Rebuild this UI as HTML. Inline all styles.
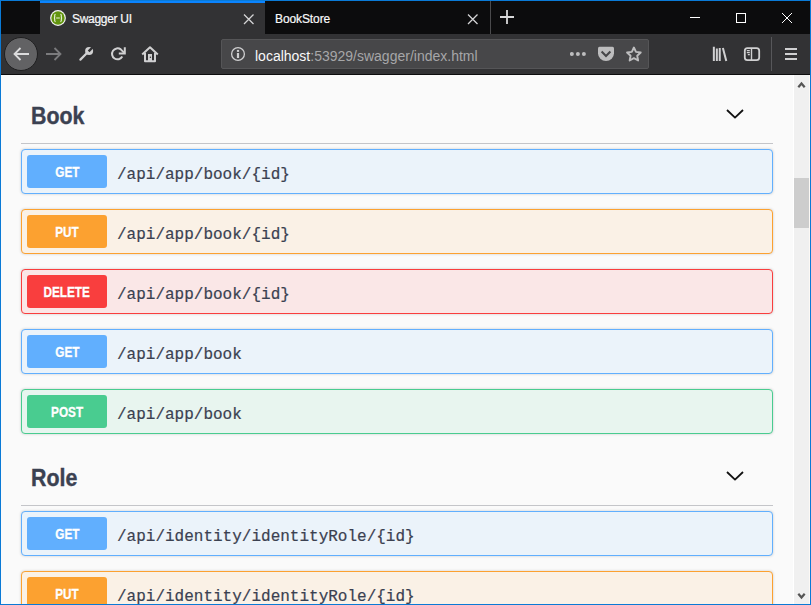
<!DOCTYPE html>
<html><head><meta charset="utf-8">
<style>
html,body{margin:0;padding:0;width:811px;height:605px;overflow:hidden;background:#0a7ad6;}
*{box-sizing:border-box;}
.abs{position:absolute;}
#titlebar{position:absolute;left:1px;top:1px;width:809px;height:33px;background:#0c0c0d;}
#toolbar{position:absolute;left:1px;top:34px;width:809px;height:40px;background:#323234;}
#tbline{position:absolute;left:1px;top:74px;width:809px;height:1px;background:#0c0c0d;}
#content{position:absolute;left:1px;top:75px;width:809px;height:529px;background:#fafafa;overflow:hidden;}
.tab{position:absolute;top:0;height:33px;}
.tabtext{position:absolute;font-family:"Liberation Sans",sans-serif;font-size:12px;color:#f9f9fa;top:11px;letter-spacing:-0.3px;-webkit-text-stroke:0.2px #f9f9fa;white-space:nowrap;}
.urlbar{position:absolute;left:220px;top:5px;width:428px;height:30px;background:#474749;border:1px solid #555557;border-radius:2px;}
.url{position:absolute;left:33px;top:7.5px;font-family:"Liberation Sans",sans-serif;font-size:14px;color:#f9f9fa;white-space:nowrap;}
.url span{color:#a6a6a8;}
.tag{position:absolute;left:20px;width:752px;height:1px;background:#c4c5c9;}
.tagname{position:absolute;left:30px;font-family:"Liberation Sans",sans-serif;font-weight:bold;font-size:24px;line-height:28px;color:#3b4151;transform:scaleX(0.89);transform-origin:0 0;-webkit-text-stroke:0.4px #3b4151;}
.op{position:absolute;left:20px;width:752px;height:45px;border:1px solid;border-radius:4px;box-shadow:0 0 3px rgba(0,0,0,.19);}
.m{position:absolute;left:5px;top:5px;width:80px;height:33px;border-radius:3px;color:#fff;font-family:"Liberation Sans",sans-serif;font-weight:bold;font-size:14px;text-align:center;line-height:35px;text-shadow:0 1px 0 rgba(0,0,0,.1);}
.p{position:absolute;left:95px;top:15px;font-family:"Liberation Mono",monospace;font-weight:normal;-webkit-text-stroke:0.2px #3b4151;font-size:16px;color:#3b4151;white-space:nowrap;line-height:20px;}
.m span{display:inline-block;transform:scaleX(0.84);-webkit-text-stroke:0.3px #fff;}
.get{background:#ebf3fa;border-color:#61affe;} .get .m{background:#61affe;}
.put{background:#faf1e6;border-color:#fca130;} .put .m{background:#fca130;}
.del{background:#fae7e7;border-color:#f93e3e;} .del .m{background:#f93e3e;}
.post{background:#e8f5ef;border-color:#49cc90;} .post .m{background:#49cc90;}
#sb{position:absolute;left:792px;top:0;width:17px;height:529px;background:#f0f0f0;border-left:1px solid #fff;border-right:1px solid #fdf9f5;}
</style></head><body>
<div id="titlebar">
  <div class="tab" style="left:39px;width:225px;background:#323234;">
    <div class="abs" style="left:0;top:0;width:225px;height:2px;background:#0a84ff;"></div>
    <svg class="abs" style="left:10px;top:9px" width="16" height="16" viewBox="0 0 16 16">
      <circle cx="8" cy="8" r="7.9" fill="#f4f4f4"/>
      <circle cx="8" cy="8" r="6.7" fill="#62940f"/>
      <path d="M5.6 4.3 Q4.6 4.4 4.7 5.6 L4.7 7.2 Q4.7 8 3.9 8 Q4.7 8 4.7 8.8 L4.7 10.4 Q4.6 11.6 5.6 11.7 M10.4 4.3 Q11.4 4.4 11.3 5.6 L11.3 7.2 Q11.3 8 12.1 8 Q11.3 8 11.3 8.8 L11.3 10.4 Q11.4 11.6 10.4 11.7" fill="none" stroke="#eef5e0" stroke-width="1.1"/>
      <path d="M6.2 8 H9.8" stroke="#cfe0b0" stroke-width="1.3"/>
    </svg>
    <div class="tabtext" style="left:32px;">Swagger UI</div>
    <svg class="abs" style="left:203px;top:12px" width="12" height="12" viewBox="0 0 12 12"><path d="M1 1.5L10.5 11M10.5 1.5L1 11" stroke="#d4d4d5" stroke-width="1.3"/></svg>
  </div>
  <div class="tabtext" style="left:274px;letter-spacing:-0.1px;">BookStore</div>
  <svg class="abs" style="left:466px;top:12px" width="12" height="12" viewBox="0 0 12 12"><path d="M1 1.5L10.5 11M10.5 1.5L1 11" stroke="#d4d4d5" stroke-width="1.3"/></svg>
  <div class="abs" style="left:489px;top:0;width:1px;height:33px;background:#4a4a4c;"></div>
  <svg class="abs" style="left:498px;top:8px" width="16" height="16" viewBox="0 0 16 16"><path d="M8 1V15M1 8H15" stroke="#d8d8d9" stroke-width="1.8"/></svg>
  <div class="abs" style="left:689px;top:16px;width:10px;height:1px;background:#fff;"></div>
  <div class="abs" style="left:735px;top:12px;width:10px;height:10px;border:1px solid #fff;"></div>
  <svg class="abs" style="left:780px;top:11px" width="12" height="12" viewBox="0 0 12 12"><path d="M1 1L11 11M11 1L1 11" stroke="#fff" stroke-width="1"/></svg>
</div>
<div id="toolbar">
  <div class="abs" style="left:3px;top:3px;width:34px;height:34px;border-radius:50%;background:#626264;border:1px solid #1f1f20;"></div>
  <svg class="abs" style="left:11px;top:12px" width="18" height="16" viewBox="0 0 18 16"><path d="M17 8H2.5M8.5 2L2.5 8L8.5 14" fill="none" stroke="#dcdcdd" stroke-width="1.8"/></svg>
  <svg class="abs" style="left:44px;top:12px" width="18" height="16" viewBox="0 0 18 16"><path d="M1 8H15.5M9.5 2L15.5 8L9.5 14" fill="none" stroke="#7b7b7d" stroke-width="1.8"/></svg>
  <svg class="abs" style="left:77px;top:12px" width="18" height="18" viewBox="0 0 18 18"><path d="M2.4 13.6L9.2 6.8" stroke="#d0d0d1" stroke-width="2.2" stroke-linecap="round"/><circle cx="11.1" cy="4.9" r="4" fill="#d0d0d1"/><path d="M10.6 5.4L16 0" stroke="#323234" stroke-width="2.4"/></svg>
  <svg class="abs" style="left:109px;top:12px" width="16" height="16" viewBox="0 0 16 16"><path d="M12.3 10.6A5.5 5.5 0 1 1 10.8 3.4L14 6.6" fill="none" stroke="#d0d0d1" stroke-width="2"/><path d="M14.8 1.2V7.4H8.8" fill="none" stroke="#d0d0d1" stroke-width="2"/></svg>
  <svg class="abs" style="left:140px;top:11px" width="18" height="18" viewBox="0 0 18 18"><path d="M1.2 9.6L9 2.3L16.8 9.6M4 8V16.3H14V8" fill="none" stroke="#d0d0d1" stroke-width="2" stroke-linejoin="round"/><rect x="7" y="9" width="4" height="7.5" fill="#d0d0d1"/><circle cx="9.4" cy="12.2" r="0.7" fill="#323234"/></svg>
  <div class="urlbar">
    <svg class="abs" style="left:8px;top:6px" width="16" height="16" viewBox="0 0 16 16"><circle cx="8" cy="8" r="6.4" fill="none" stroke="#cfcfd0" stroke-width="1.3"/><rect x="6.9" y="7" width="2.2" height="5" fill="#cfcfd0"/><rect x="6.9" y="3.9" width="2.2" height="2" fill="#cfcfd0"/></svg>
    <div class="url">localhost<span>:53929/swagger/index.html</span></div>
    <svg class="abs" style="left:348px;top:11px" width="18" height="6" viewBox="0 0 18 6"><circle cx="1.9" cy="3" r="2" fill="#bdbdbe"/><circle cx="7.9" cy="3" r="2" fill="#bdbdbe"/><circle cx="13.9" cy="3" r="2" fill="#bdbdbe"/></svg>
    <svg class="abs" style="left:376px;top:6px" width="17" height="16" viewBox="0 0 17 16"><path d="M0 2.3Q0 0.8 1.5 0.8H14.5Q16 0.8 16 2.3V7.2A8 7.8 0 0 1 0 7.2Z" fill="#bdbdbe"/><path d="M3.6 5.6L8 10L12.4 5.6" fill="none" stroke="#474749" stroke-width="2.1"/></svg>
    <svg class="abs" style="left:403px;top:6px" width="18" height="17" viewBox="0 0 18 17"><path d="M8.90 1.50 L10.96 5.87 L15.75 6.48 L12.23 9.78 L13.13 14.52 L8.90 12.20 L4.67 14.52 L5.57 9.78 L2.05 6.48 L6.84 5.87Z" fill="none" stroke="#bdbdbe" stroke-width="1.9" stroke-linejoin="round"/></svg>
  </div>
  <svg class="abs" style="left:711px;top:12px" width="17" height="16" viewBox="0 0 17 16"><path d="M1.85 0.8V15M4.85 2.6V15M7.75 1.9V15M10.9 1.9L14.3 15" stroke="#d0d0d1" stroke-width="2"/></svg>
  <svg class="abs" style="left:742px;top:12px" width="18" height="16" viewBox="0 0 18 16"><rect x="1.8" y="2.1" width="14.4" height="12" rx="2.6" fill="none" stroke="#d0d0d1" stroke-width="1.8"/><path d="M8.5 2V14" stroke="#d0d0d1" stroke-width="1.4"/><path d="M3.8 4.6H6.8M3.8 6.6H6.8M4.8 8.6H6.8" stroke="#d0d0d1" stroke-width="1.1"/></svg>
  <div class="abs" style="left:770px;top:3px;width:1px;height:34px;background:#57575a;"></div>
  <svg class="abs" style="left:783px;top:13px" width="14" height="14" viewBox="0 0 14 14"><path d="M1 2H13M1 7H13M1 12H13" stroke="#d0d0d1" stroke-width="2"/></svg>
</div>
<div id="tbline"></div>
<div id="content">
  <div class="tagname" style="top:27px;">Book</div>
  <svg class="abs" style="left:725px;top:33px" width="19" height="12" viewBox="0 0 19 12"><path d="M1 2L9 9.6L17 2" fill="none" stroke="#111" stroke-width="1.8" stroke-linejoin="round"/></svg>
  <div class="tag" style="top:68px;"></div>
  <div class="op get" style="top:74px;"><div class="m"><span>GET</span></div><div class="p">/api/app/book/{id}</div></div>
  <div class="op put" style="top:134px;"><div class="m"><span>PUT</span></div><div class="p">/api/app/book/{id}</div></div>
  <div class="op del" style="top:194px;"><div class="m"><span>DELETE</span></div><div class="p">/api/app/book/{id}</div></div>
  <div class="op get" style="top:254px;"><div class="m"><span>GET</span></div><div class="p">/api/app/book</div></div>
  <div class="op post" style="top:314px;"><div class="m"><span>POST</span></div><div class="p">/api/app/book</div></div>
  <div class="tagname" style="top:389px;left:30px;">Role</div>
  <svg class="abs" style="left:725px;top:395px" width="19" height="12" viewBox="0 0 19 12"><path d="M1 2L9 9.6L17 2" fill="none" stroke="#111" stroke-width="1.8" stroke-linejoin="round"/></svg>
  <div class="tag" style="top:430px;"></div>
  <div class="op get" style="top:436px;"><div class="m"><span>GET</span></div><div class="p">/api/identity/identityRole/{id}</div></div>
  <div class="op put" style="top:496px;"><div class="m"><span>PUT</span></div><div class="p">/api/identity/identityRole/{id}</div></div>
  <div id="sb">
    <svg class="abs" style="left:3px;top:5px" width="9" height="9" viewBox="0 0 9 9"><path d="M1.3 7.3L4.5 3.5L7.7 7.3" fill="none" stroke="#555" stroke-width="2.2"/></svg>
    <div class="abs" style="left:0;top:103px;width:15px;height:50px;background:#cdcdcd;"></div>
    <svg class="abs" style="left:3px;top:517px" width="9" height="9" viewBox="0 0 9 9"><path d="M1.3 1.7L4.5 5.5L7.7 1.7" fill="none" stroke="#555" stroke-width="2.2"/></svg>
  </div>
</div>
</body></html>
